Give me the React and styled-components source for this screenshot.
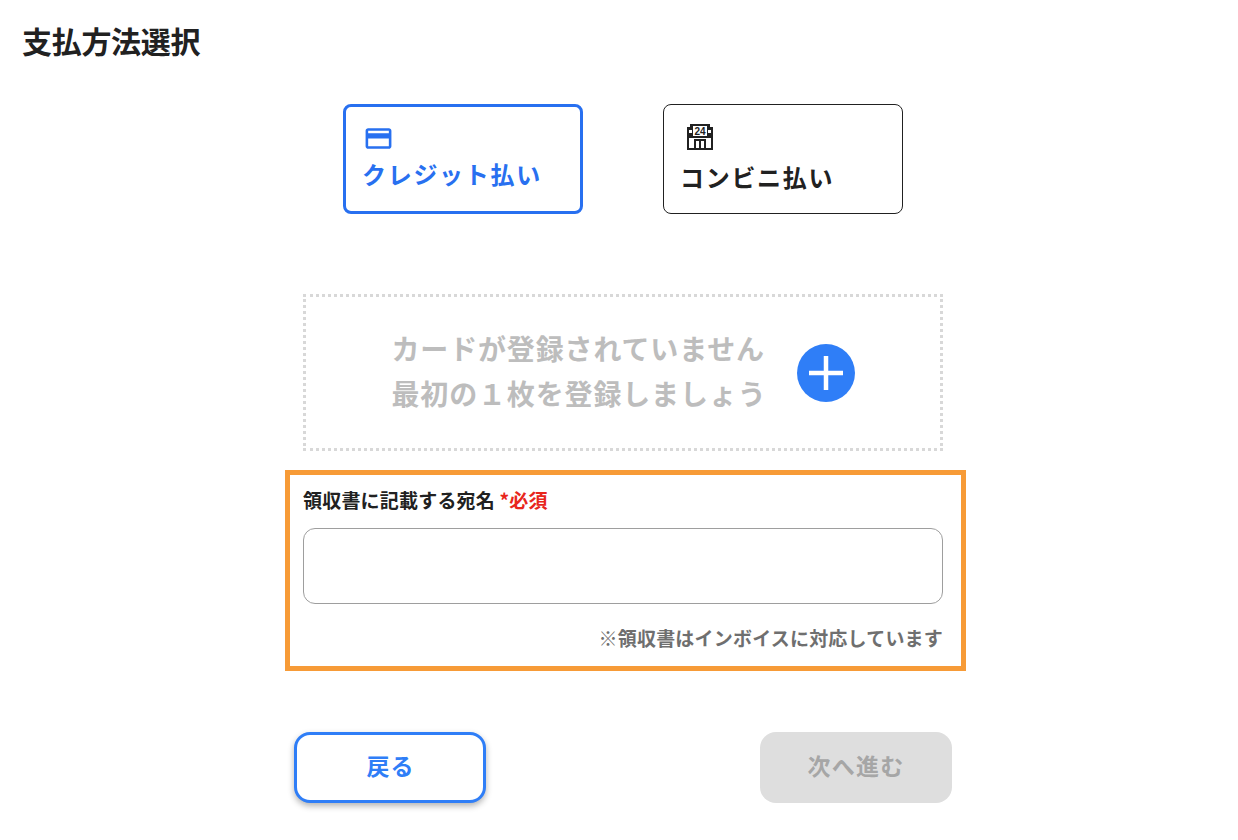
import React from "react";
import styled, { createGlobalStyle } from "styled-components";
import { MdCreditCard } from "react-icons/md";

const GlobalStyle = createGlobalStyle`
  html, body {
    margin: 0;
    padding: 0;
    background: #fff;
  }
  body {
    font-family: "Noto Sans CJK JP", "Inter", sans-serif;
    color: #212121;
  }
`;

const StoreIcon = () => (
  <StoreSvg viewBox="0 0 26 26">
    <path d="M3 0h20v3h3v23H0V3h3z" fill="#212121" />
    <rect x="6" y="2" width="14" height="10" fill="#fff" />
    <rect x="2" y="6" width="3" height="3" fill="#fff" />
    <rect x="21" y="6" width="3" height="3" fill="#fff" />
    <rect x="2" y="14" width="22" height="10" fill="#fff" />
    <path d="M7 15h12v11H7z" fill="#212121" />
    <rect x="9" y="17" width="3" height="7" fill="#fff" />
    <rect x="14" y="17" width="3" height="7" fill="#fff" />
    <StoreHours x="13" y="10.6">24</StoreHours>
  </StoreSvg>
);

const App = () => {
  return (
    <Page>
      <GlobalStyle />
      <Title>支払方法選択</Title>
      <Content>
        <Methods>
          <Method $active>
            <CardIcon />
            <MethodName>クレジット払い</MethodName>
          </Method>
          <Method>
            <StoreIcon />
            <MethodName $shift>コンビニ払い</MethodName>
          </Method>
        </Methods>
        <EmptyCard>
          <EmptyText>
            カードが登録されていません
            <br />
            最初の１枚を登録しましょう
          </EmptyText>
          <AddButton aria-label="追加">
            <svg width="34" height="34" viewBox="0 0 34 34">
              <path d="M17 0v34M0 17h34" stroke="#fff" strokeWidth="4.5" fill="none" />
            </svg>
          </AddButton>
        </EmptyCard>
        <Highlight>
          <Label>
            領収書に記載する宛名 <Required>*必須</Required>
          </Label>
          <Input />
          <Note>※領収書はインボイスに対応しています</Note>
        </Highlight>
        <Actions>
          <BackButton>戻る</BackButton>
          <NextButton disabled>次へ進む</NextButton>
        </Actions>
      </Content>
    </Page>
  );
};

export default App;

const Page = styled.div`
  width: 1238px;
  height: 840px;
  overflow: hidden;
  padding-top: 20px;
  box-sizing: border-box;
`;

const Title = styled.h1`
  margin: 0 0 0 22px;
  font-size: 30px;
  line-height: 40px;
  letter-spacing: -0.3px;
  font-weight: 700;
`;

const Content = styled.div`
  width: 640px;
  margin: 44px 0 0 303px;
`;

const Methods = styled.div`
  display: flex;
  justify-content: center;
  gap: 80px;
`;

const Method = styled.button`
  width: 240px;
  height: 110px;
  box-sizing: border-box;
  padding: ${(p) => (p.$active ? "17px 16px" : "18px 16px")};
  display: flex;
  flex-direction: column;
  align-items: flex-start;
  background: #fff;
  font-family: inherit;
  border-radius: 8px;
  border: ${(p) => (p.$active ? "3px solid #2870f0" : "1px solid #212121")};
  color: ${(p) => (p.$active ? "#2870f0" : "#212121")};
`;

const CardIcon = styled(MdCreditCard)`
  width: 31px;
  height: 31px;
  margin: -1px 0 1px 1px;
`;

const StoreSvg = styled.svg`
  width: 26px;
  height: 26px;
  margin: 1px 0 1px 7px;
  flex: none;
`;

const StoreHours = styled.text`
  font-family: "Liberation Sans", sans-serif;
  font-size: 10px;
  font-weight: 700;
  text-anchor: middle;
  fill: #212121;
`;

const MethodName = styled.span`
  font-size: 24px;
  line-height: 36px;
  font-weight: 700;
  letter-spacing: 1.7px;
  margin-top: ${(p) => (p.$shift ? "8px" : "1px")};
`;

const EmptyCard = styled.div`
  height: 157px;
  margin-top: 80px;
  box-sizing: border-box;
  border: 3px dotted #d8d8d8;
  display: flex;
  align-items: center;
  justify-content: center;
  gap: 30px;
`;

const EmptyText = styled.p`
  margin: 0;
  padding-bottom: 4px;
  font-size: 28px;
  line-height: 45px;
  font-weight: 700;
  letter-spacing: 0.85px;
  color: #bdbdbd;
`;

const AddButton = styled.div`
  width: 58px;
  height: 58px;
  border-radius: 50%;
  background: #2f7ef7;
  display: flex;
  align-items: center;
  justify-content: center;
`;

const Highlight = styled.section`
  margin: 19px -23px 0 -18px;
  padding: 12px 18px 14px 13px;
  height: 201px;
  box-sizing: border-box;
  border: 5px solid #f79b37;
`;

const Label = styled.div`
  font-size: 19px;
  line-height: 26px;
  font-weight: 700;
  letter-spacing: 0.2px;
`;

const Required = styled.span`
  color: #e8261c;
`;

const Input = styled.input`
  display: block;
  width: 100%;
  height: 76px;
  margin-top: 15px;
  box-sizing: border-box;
  background: #fff;
  border: 1px solid #9e9e9e;
  border-radius: 12px;
  outline: none;
`;

const Note = styled.div`
  margin-top: 21px;
  font-size: 19px;
  line-height: 26px;
  font-weight: 700;
  letter-spacing: 0.2px;
  color: #6f6f6f;
  text-align: right;
`;

const Actions = styled.div`
  display: flex;
  justify-content: space-between;
  margin: 61px -9px 0;
`;

const BackButton = styled.button`
  width: 192px;
  height: 71px;
  box-sizing: border-box;
  border: 3px solid #2f7ef7;
  border-radius: 16px;
  background: #fff;
  color: #2f7ef7;
  font-family: inherit;
  font-size: 23px;
  letter-spacing: 1px;
  font-weight: 700;
  padding: 0 0 5px 1px;
  box-shadow: 0 3px 6px rgba(0, 0, 0, 0.3);
`;

const NextButton = styled.button`
  width: 192px;
  height: 71px;
  border: none;
  border-radius: 16px;
  background: #dedede;
  color: #a6a6a6;
  font-family: inherit;
  font-size: 23px;
  letter-spacing: 1.2px;
  font-weight: 700;
  padding: 0 0 5px;
`;
